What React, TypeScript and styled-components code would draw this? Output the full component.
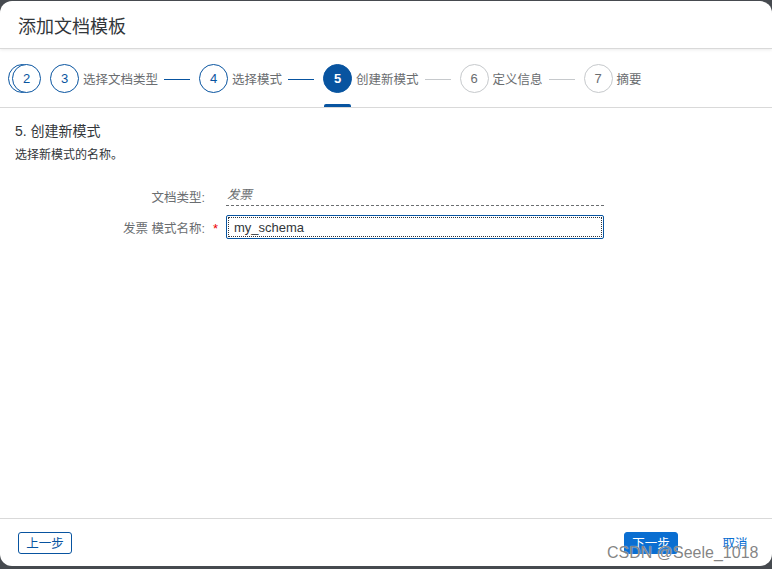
import React from 'react';
import styled, { createGlobalStyle, css } from 'styled-components';

const GlobalStyle = createGlobalStyle`
	html, body {
		margin: 0;
		padding: 0;
		background: #464a4f;
	}
	body {
		font-family: "Liberation Sans", "Noto Sans CJK SC", sans-serif;
		color: #32363a;
	}
`;

const Dialog = styled.div`
	position: relative;
	margin-top: 1px;
	width: 772px;
	height: 565px;
	background: #fff;
	border-radius: 12px;
	display: flex;
	flex-direction: column;
	overflow: hidden;
`;

const Header = styled.div`
	height: 47px;
	display: flex;
	align-items: center;
	padding: 0 18px;
	border-bottom: 1px solid #d9d9d9;
	box-shadow: 0 1px 3px rgba(0, 0, 0, 0.08);
	font-size: 18px;
	color: #32363a;
`;

const StepBar = styled.div`
	height: 58px;
	display: flex;
	align-items: stretch;
	padding-left: 12px;
	border-bottom: 1px solid #d9d9d9;
`;

const Step = styled.div<{ $active?: boolean }>`
	position: relative;
	isolation: isolate;
	display: flex;
	align-items: center;

	${(p) =>
		p.$active &&
		css`
			&::after {
				content: '';
				position: absolute;
				left: 1px;
				bottom: 0;
				width: 27px;
				height: 3px;
				border-radius: 2px 2px 0 0;
				background: #0854a0;
			}
		`}
`;

const Circle = styled.div<{ $state: 'done' | 'active' | 'todo'; $stacked?: boolean }>`
	position: relative;
	box-sizing: border-box;
	width: 29px;
	height: 29px;
	border-radius: 50%;
	display: flex;
	align-items: center;
	justify-content: center;
	font-size: 13px;
	font-family: "Liberation Sans", Arial, sans-serif;
	border: 1px solid ${(p) => (p.$state === 'todo' ? '#c6c9cc' : '#0854a0')};
	color: ${(p) => (p.$state === 'active' ? '#fff' : p.$state === 'done' ? '#0854a0' : '#6a6d70')};
	background: ${(p) => (p.$state === 'active' ? '#0854a0' : '#fff')};
	font-weight: ${(p) => (p.$state === 'active' ? 700 : 400)};

	${(p) =>
		p.$stacked &&
		css`
			&::before {
				content: '';
				position: absolute;
				left: -5px;
				top: -1px;
				box-sizing: border-box;
				width: 29px;
				height: 29px;
				border-radius: 50%;
				border: 1px solid #0854a0;
				z-index: -1;
			}
		`}
`;

const StepLabel = styled.span`
	margin-left: 4px;
	font-size: 12.5px;
	color: #6a6d70;
	white-space: nowrap;
`;

const Connector = styled.span<{ $done?: boolean }>`
	width: 26px;
	height: 1px;
	margin: 2px 9px 0 6px;
	background: ${(p) => (p.$done ? '#0854a0' : '#c6c9cc')};
	align-self: center;
`;

const Spacer = styled.span`
	width: 9px;
`;

const Body = styled.div`
	flex: 1;
	padding: 13px 15px 0;
`;

const Title = styled.div`
	font-size: 14px;
	line-height: 20px;
	color: #32363a;
`;

const Subtitle = styled.div`
	margin-top: 5px;
	font-size: 12px;
	line-height: 18px;
	color: #32363a;
`;

const Form = styled.div`
	margin-top: 22px;
	display: grid;
	grid-template-columns: 190px 21px 378px;
	row-gap: 9px;
	align-items: center;
`;

const Label = styled.label`
	text-align: right;
	font-size: 12.5px;
	color: #6a6d70;
`;

const Required = styled.span`
	color: #e00;
	font-size: 13px;
	padding-left: 8px;
	position: relative;
	top: 1px;
`;

const Display = styled.div`
	height: 19px;
	line-height: 18px;
	padding-left: 1px;
	border-bottom: 1px dashed #6a6d70;
	font-size: 12.5px;
	font-style: italic;
	color: #6a6d70;
`;

const Input = styled.input`
	box-sizing: border-box;
	width: 378px;
	height: 24px;
	padding: 0 7px;
	border: 1px solid #0854a0;
	border-radius: 2px;
	outline: 1px dotted #32363a;
	outline-offset: -3px;
	font-family: "Liberation Sans", "Noto Sans CJK SC", sans-serif;
	font-size: 13px;
	color: #32363a;
	background: #fff;
`;

const Footer = styled.div`
	height: 47px;
	border-top: 1px solid #d9d9d9;
	display: flex;
	align-items: center;
	justify-content: space-between;
	padding: 0 10px 0 18px;
`;

const RightGroup = styled.div`
	display: flex;
	align-items: center;
	gap: 30px;
`;

const Button = styled.button<{ $variant?: 'ghost' | 'emphasized' | 'transparent' }>`
	box-sizing: border-box;
	width: 54px;
	height: 22px;
	padding: 0;
	border-radius: 3px;
	font-family: "Liberation Sans", "Noto Sans CJK SC", sans-serif;
	font-size: 12.5px;
	cursor: pointer;
	border: 1px solid
		${(p) => (p.$variant === 'ghost' ? '#0854a0' : p.$variant === 'emphasized' ? '#0a6ed1' : 'transparent')};
	background: ${(p) => (p.$variant === 'emphasized' ? '#0a6ed1' : '#fff')};
	color: ${(p) => (p.$variant === 'emphasized' ? '#fff' : p.$variant === 'ghost' ? '#0854a0' : '#0a6ed1')};
`;

const Watermark = styled.div`
	position: absolute;
	left: 607px;
	top: 543px;
	font-family: "Liberation Sans", Arial, sans-serif;
	font-size: 16px;
	line-height: 18px;
	color: rgba(110, 110, 110, 0.85);
	text-shadow: 0 0 1px #fff;
	pointer-events: none;
`;

type StepDef = { n: number; label?: string; state: 'done' | 'active' | 'todo' };

const steps: StepDef[] = [
	{ n: 2, state: 'done' },
	{ n: 3, label: '选择文档类型', state: 'done' },
	{ n: 4, label: '选择模式', state: 'done' },
	{ n: 5, label: '创建新模式', state: 'active' },
	{ n: 6, label: '定义信息', state: 'todo' },
	{ n: 7, label: '摘要', state: 'todo' },
];

export default function App() {
	return (
		<>
			<GlobalStyle />
			<Dialog>
				<Header>添加文档模板</Header>

				<StepBar>
					{steps.map((s, i) => (
						<React.Fragment key={s.n}>
							<Step $active={s.state === 'active'}>
								<Circle $state={s.state} $stacked={i === 0}>
									{s.n}
								</Circle>
								{s.label && <StepLabel>{s.label}</StepLabel>}
							</Step>
							{i === 0 && <Spacer />}
							{i > 0 && i < steps.length - 1 && (
								<Connector $done={s.state === 'done'} />
							)}
						</React.Fragment>
					))}
				</StepBar>

				<Body>
					<Title>5. 创建新模式</Title>
					<Subtitle>选择新模式的名称。</Subtitle>

					<Form>
						<Label>文档类型:</Label>
						<span />
						<Display>发票</Display>

						<Label>发票 模式名称:</Label>
						<Required>*</Required>
						<Input defaultValue="my_schema" />
					</Form>
				</Body>

				<Footer>
					<Button $variant="ghost">上一步</Button>
					<RightGroup>
						<Button $variant="emphasized">下一步</Button>
						<Button $variant="transparent">取消</Button>
					</RightGroup>
				</Footer>

				<Watermark>CSDN @Seele_1018</Watermark>
			</Dialog>
		</>
	);
}
